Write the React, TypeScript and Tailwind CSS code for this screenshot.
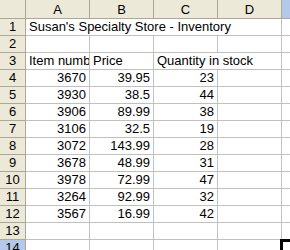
const font = { fontFamily: '"Liberation Sans", Arial, sans-serif' };

const items: [string, string, string][] = [
  ['3670', '39.95', '23'],
  ['3930', '38.5', '44'],
  ['3906', '89.99', '38'],
  ['3106', '32.5', '19'],
  ['3072', '143.99', '28'],
  ['3678', '48.99', '31'],
  ['3978', '72.99', '47'],
  ['3264', '92.99', '32'],
  ['3567', '16.99', '42'],
];

function ColHead({ label, active }: { label: string; active?: boolean }) {
  return (
    <div
      className={`flex items-center justify-center border-r border-b border-[#aca899] text-[13px] leading-none ${
        active ? 'bg-[#b3c8ea]' : 'bg-[#ece9d8]'
      }`}
    >
      {label}
    </div>
  );
}

function RowHead({ n, active }: { n: number; active?: boolean }) {
  return (
    <div
      className={`flex items-end justify-center pb-[2px] border-r border-b border-[#aca899] text-[13px] leading-none ${
        active ? 'bg-[#b3c8ea]' : 'bg-[#ece9d8]'
      }`}
    >
      {n}
    </div>
  );
}

function Cell({
  children,
  num,
  span,
  clip,
  last,
}: {
  children?: React.ReactNode;
  num?: boolean;
  span?: string;
  clip?: boolean;
  last?: boolean;
}) {
  return (
    <div
      className={`flex items-end pb-[2px] border-b border-[#c0c0c0] text-[13px] leading-none whitespace-nowrap ${
        last ? '' : 'border-r'
      } ${num ? 'justify-end pr-[3px]' : 'pl-[3px]'} ${clip ? 'overflow-hidden' : ''} ${span ?? ''}`}
    >
      {children}
    </div>
  );
}

export default function App() {
  return (
    <div className="relative w-[290px] h-[250px] overflow-hidden bg-white text-black" style={font}>
      <div className="grid grid-cols-[26px_64px_64px_64px_64px_80px] grid-rows-[19px_repeat(14,17px)]">
        <div className="bg-[#ece9d8] border-r border-b border-[#aca899]" />
        <ColHead label="A" />
        <ColHead label="B" />
        <ColHead label="C" />
        <ColHead label="D" />
        <ColHead label="E" active />

        <RowHead n={1} />
        <Cell span="col-span-4">Susan's Specialty Store - Inventory</Cell>
        <Cell last />

        <RowHead n={2} />
        <Cell />
        <Cell />
        <Cell />
        <Cell />
        <Cell last />

        <RowHead n={3} />
        <Cell clip>Item number</Cell>
        <Cell>Price</Cell>
        <Cell span="col-span-2">Quantity in stock</Cell>
        <Cell last />

        {items.map(([id, price, qty], i) => (
          <div key={id} className="contents">
            <RowHead n={i + 4} />
            <Cell num>{id}</Cell>
            <Cell num>{price}</Cell>
            <Cell num>{qty}</Cell>
            <Cell />
            <Cell last />
          </div>
        ))}

        <RowHead n={13} />
        <Cell />
        <Cell />
        <Cell />
        <Cell />
        <Cell last />

        <RowHead n={14} active />
        <Cell />
        <Cell />
        <Cell />
        <Cell />
        <Cell last />
      </div>
      {/* active cell E14 */}
      <div className="absolute left-[280px] top-[239px] w-[40px] h-[30px] border-l-[3px] border-t-[3px] border-black" />
    </div>
  );
}
